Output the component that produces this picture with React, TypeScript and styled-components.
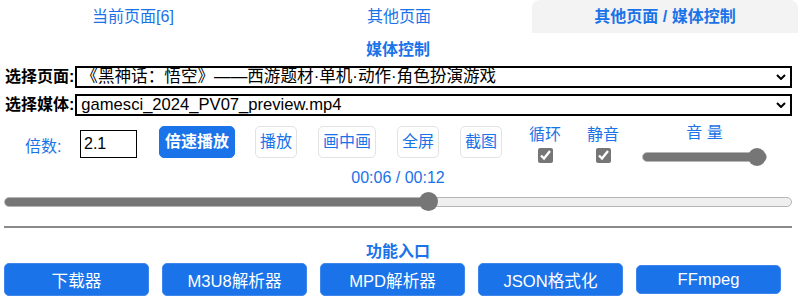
import React from "react";
import styled, { createGlobalStyle } from "styled-components";

const GlobalStyle = createGlobalStyle`
  html, body { margin: 0; padding: 0; background: #fff; }
  body {
    font-family: "Liberation Sans", Arial, "Noto Sans CJK SC", sans-serif;
    font-size: 16px;
    color: #000;
  }
  * { box-sizing: border-box; }
`;

const BLUE = "#1a73e8";

const Page = styled.div`
  width: 798px;
`;

const Tabs = styled.div`
  display: flex;
  height: 33px;
`;

const Tab = styled.div<{ $active?: boolean }>`
  flex: 1;
  text-align: center;
  line-height: 33px;
  font-size: 16px;
  color: ${BLUE};
  font-weight: ${(p) => (p.$active ? 700 : 400)};
  background: ${(p) => (p.$active ? "#f3f3f3" : "transparent")};
  border-radius: 8px 8px 0 0;
`;

const Content = styled.div`
  padding: 0 6px 0 4px;
`;

const SectionTitle = styled.div<{ $top: number }>`
  margin-top: ${(p) => p.$top}px;
  text-align: center;
  font-weight: 700;
  font-size: 16px;
  line-height: 20px;
  color: ${BLUE};
`;

const FieldRow = styled.div<{ $top: number }>`
  display: flex;
  align-items: center;
  margin-top: ${(p) => p.$top}px;
  height: 22px;
`;

const FieldLabel = styled.label`
  font-weight: 700;
  font-size: 16px;
  line-height: 22px;
  padding-left: 1px;
  margin-right: 1px;
  white-space: nowrap;
`;

const SelectWrap = styled.div`
  position: relative;
  flex: 1;
  height: 22px;
`;

const Select = styled.select`
  appearance: none;
  -webkit-appearance: none;
  width: 100%;
  height: 22px;
  border: 2px solid #000;
  border-radius: 0;
  background: #fff;
  font-family: "Liberation Sans", Arial, "Noto Sans CJK SC", sans-serif;
  font-size: 16.6px;
  line-height: 18px;
  padding: 0 20px 0 4px;
  color: #000;
  outline: none;
`;

const Chevron = styled.svg`
  position: absolute;
  right: 6px;
  top: 8px;
  width: 10px;
  height: 6px;
  pointer-events: none;
`;

const Controls = styled.div`
  display: flex;
  align-items: flex-start;
  margin-top: 10px;
  padding-left: 21px;
  height: 40px;
`;

const NumLabel = styled.span`
  width: 38px;
  margin-top: 10px;
  line-height: 22px;
  font-size: 16px;
  color: ${BLUE};
  white-space: nowrap;
`;

const NumInput = styled.input`
  margin-left: 17px;
  margin-top: 4px;
  width: 57px;
  height: 28px;
  border: 1px solid #000;
  border-radius: 0;
  padding: 0 3px;
  font-family: "Liberation Sans", Arial, sans-serif;
  font-size: 16px;
  color: #000;
  outline: none;
`;

const Btn = styled.button<{ $primary?: boolean; $ml: number }>`
  margin-left: ${(p) => p.$ml}px;
  height: 32px;
  padding: 0 ${(p) => (p.$primary ? 5 : 4)}px;
  border-radius: 5px;
  border: 1px solid ${(p) => (p.$primary ? BLUE : "#e3e3e3")};
  background: ${(p) => (p.$primary ? BLUE : "#fff")};
  color: ${(p) => (p.$primary ? "#fff" : BLUE)};
  font-family: "Liberation Sans", Arial, "Noto Sans CJK SC", sans-serif;
  font-weight: ${(p) => (p.$primary ? 700 : 400)};
  font-size: 16px;
  line-height: 30px;
  white-space: nowrap;
`;

const CheckCol = styled.div<{ $ml: number }>`
  margin-left: ${(p) => p.$ml}px;
  width: 32px;
  display: flex;
  flex-direction: column;
  align-items: center;
`;

const SmallLabel = styled.span`
  font-size: 16px;
  line-height: 18px;
  color: ${BLUE};
  white-space: pre;
`;

const Check = styled.input`
  margin: 4px 0 0 0;
  width: 15px;
  height: 15px;
  accent-color: #767676;
`;

const VolumeCol = styled.div`
  margin-left: 23px;
  margin-top: -2px;
  width: 125px;
  display: flex;
  flex-direction: column;
  align-items: center;
`;

const Range = styled.input<{ $h: number; $thumb: number }>`
  -webkit-appearance: none;
  appearance: none;
  display: block;
  width: 100%;
  height: ${(p) => p.$thumb}px;
  margin: 0;
  background: transparent;
  outline: none;
  &::-webkit-slider-runnable-track {
    height: ${(p) => p.$h}px;
    border-radius: ${(p) => p.$h / 2}px;
    border: 1px solid #b5b5b5;
    background: var(--fill);
  }
  &::-webkit-slider-thumb {
    -webkit-appearance: none;
    width: ${(p) => p.$thumb}px;
    height: ${(p) => p.$thumb}px;
    border-radius: 50%;
    background: #767676;
    border: none;
    margin-top: ${(p) => -((p.$thumb - p.$h) / 2) - 1}px;
  }
`;

const VolumeRange = styled(Range)`
  margin-top: 6px;
`;

const TimeText = styled.div`
  margin-top: 2px;
  text-align: center;
  font-size: 16px;
  line-height: 20px;
  color: ${BLUE};
`;

const SeekWrap = styled.div`
  margin-top: 4px;
`;

const Divider = styled.hr`
  margin: 15px 0 0 0;
  border: none;
  border-top: 2px solid #8a8a8a;
  height: 0;
`;

const EntryRow = styled.div`
  display: flex;
  align-items: center;
  gap: 13px;
  margin-top: 1px;
  height: 33px;
`;

const EntryBtn = styled.button<{ $short?: boolean }>`
  width: 145px;
  height: ${(p) => (p.$short ? 29 : 33)}px;
  border: 1px solid #3f86ec;
  border-radius: 5px;
  background: ${BLUE};
  color: #fff;
  font-family: "Liberation Sans", Arial, "Noto Sans CJK SC", sans-serif;
  font-size: 16.6px;
  padding: 0;
`;

const fill = (pct: number) =>
  ({
    ["--fill" as string]: `linear-gradient(to right, #767676 0%, #767676 ${pct}%, #efefef ${pct}%, #efefef 100%)`,
  } as React.CSSProperties);

const ChevronIcon = () => (
  <Chevron viewBox="0 0 10 6">
    <path d="M1 1 L5 5 L9 1" fill="none" stroke="#000" strokeWidth="2" />
  </Chevron>
);

export default function App() {
  const seek = 54;
  return (
    <Page>
      <GlobalStyle />
      <Tabs>
        <Tab>当前页面[6]</Tab>
        <Tab>其他页面</Tab>
        <Tab $active>其他页面 / 媒体控制</Tab>
      </Tabs>
      <Content>
        <SectionTitle $top={7}>媒体控制</SectionTitle>
        <FieldRow $top={6}>
          <FieldLabel>选择页面:</FieldLabel>
          <SelectWrap>
            <Select defaultValue="a">
              <option value="a">《黑神话：悟空》——西游题材·单机·动作·角色扮演游戏</option>
            </Select>
            <ChevronIcon />
          </SelectWrap>
        </FieldRow>
        <FieldRow $top={6}>
          <FieldLabel>选择媒体:</FieldLabel>
          <SelectWrap>
            <Select defaultValue="m">
              <option value="m">gamesci_2024_PV07_preview.mp4</option>
            </Select>
            <ChevronIcon />
          </SelectWrap>
        </FieldRow>
        <Controls>
          <NumLabel>倍数:</NumLabel>
          <NumInput defaultValue="2.1" />
          <Btn $primary $ml={22}>倍速播放</Btn>
          <Btn $ml={20}>播放</Btn>
          <Btn $ml={21}>画中画</Btn>
          <Btn $ml={21}>全屏</Btn>
          <Btn $ml={21}>截图</Btn>
          <CheckCol $ml={27}>
            <SmallLabel>循环</SmallLabel>
            <Check type="checkbox" defaultChecked />
          </CheckCol>
          <CheckCol $ml={26}>
            <SmallLabel>静音</SmallLabel>
            <Check type="checkbox" defaultChecked />
          </CheckCol>
          <VolumeCol>
            <SmallLabel>音 量</SmallLabel>
            <VolumeRange
              type="range"
              min={0}
              max={100}
              defaultValue={100}
              $h={10}
              $thumb={18}
              style={fill(100)}
            />
          </VolumeCol>
        </Controls>
        <TimeText>00:06 / 00:12</TimeText>
        <SeekWrap>
          <Range
            type="range"
            min={0}
            max={100}
            defaultValue={seek}
            $h={10}
            $thumb={19}
            style={fill(seek)}
          />
        </SeekWrap>
        <Divider />
        <SectionTitle $top={14}>功能入口</SectionTitle>
        <EntryRow>
          <EntryBtn>下载器</EntryBtn>
          <EntryBtn>M3U8解析器</EntryBtn>
          <EntryBtn>MPD解析器</EntryBtn>
          <EntryBtn>JSON格式化</EntryBtn>
          <EntryBtn $short>FFmpeg</EntryBtn>
        </EntryRow>
      </Content>
    </Page>
  );
}
